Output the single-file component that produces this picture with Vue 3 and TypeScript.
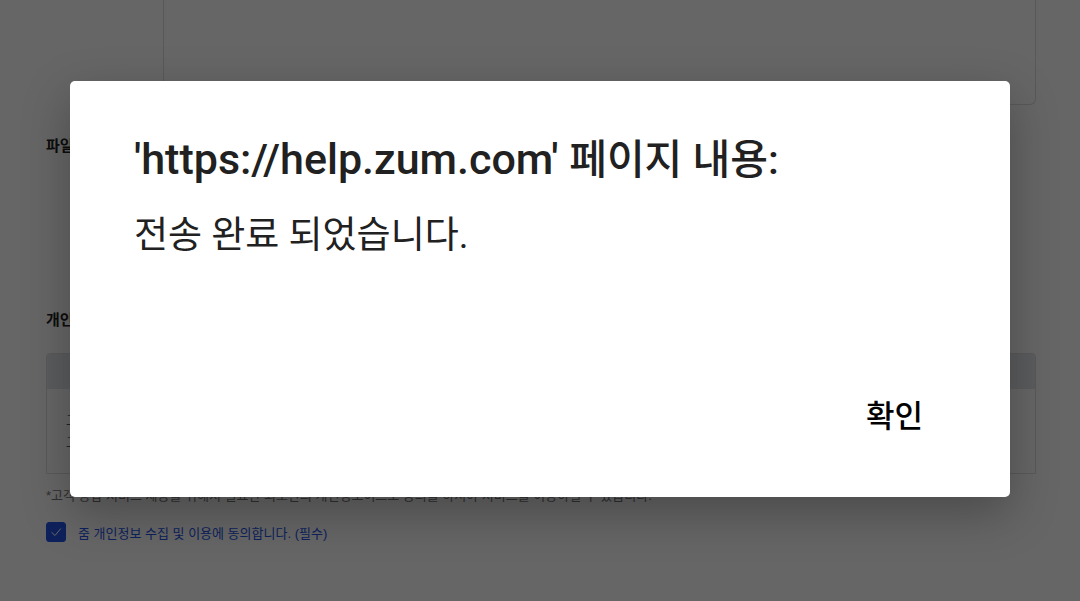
<script setup lang="ts">
import { ref } from 'vue'

const open = ref(true)
const agreed = ref(true)
const message = ref('')
const site = 'https://help.zum.com'
const columns: string[] = ['목적', '항목', '보유 및 이용기간']
</script>

<template>
  <div class="page">
    <form class="form" @submit.prevent>
      <div class="inquiry">
        <textarea v-model="message" class="message" aria-label="문의 내용"></textarea>
      </div>
      <div class="files">
        <span class="label">파일 첨부</span>
      </div>
      <h2 class="label heading">개인정보 수집 및 이용 동의</h2>
      <table class="terms">
        <thead>
          <tr>
            <th v-for="column in columns" :key="column" scope="col">{{ column }}</th>
          </tr>
        </thead>
        <tbody>
          <tr>
            <td>고객 문의 접수<br />고객 문의 회신</td>
            <td>이메일 주소</td>
            <td>3년</td>
          </tr>
        </tbody>
      </table>
      <p class="note">*고객 응답 서비스 제공을 위해서 필요한 최소한의 개인정보이므로 동의를 하셔야 서비스를 이용하실 수 있습니다.</p>
      <label class="agree" for="agree">
        <span class="tick">
          <input id="agree" v-model="agreed" type="checkbox" />
          <svg v-if="agreed" viewBox="0 0 20 20" aria-hidden="true">
            <path d="M5.5 10.2 L9 13.5 L14.8 6.5" />
          </svg>
        </span>
        <span>줌 개인정보 수집 및 이용에 동의합니다. (필수)</span>
      </label>
    </form>

    <div v-if="open" class="overlay">
      <div class="dialog" role="alertdialog" aria-modal="true" aria-labelledby="dialog-title" aria-describedby="dialog-text">
        <h1 id="dialog-title" class="dialog-title"><span class="site">'{{ site }}' </span>페이지 내용:</h1>
        <p id="dialog-text" class="dialog-text">전송 완료 되었습니다.</p>
        <div class="actions">
          <button type="button" class="confirm" @click="open = false">확인</button>
        </div>
      </div>
    </div>
  </div>
</template>

<style>
body {
  background: #fff;
}
</style>

<style scoped>
.page {
  position: relative;
  min-height: 100vh;
  overflow: hidden;
  font-family: "Noto Sans CJK KR", sans-serif;
  color: #222;
}

.page * {
  box-sizing: border-box;
}

.form {
  padding: 0 44px 0 46px;
}

.label {
  margin: 0;
  font-size: 15px;
  line-height: 20px;
  font-weight: 700;
}

.inquiry {
  display: flex;
  height: 105px;
  padding-left: 117px;
}

.message {
  flex: 1;
  min-width: 0;
  padding: 16px;
  border: 1px solid #dedede;
  border-top: 0;
  border-radius: 0 0 6px 6px;
  background: #fff;
  font: inherit;
  resize: none;
}

.files {
  display: flex;
  height: 174px;
  padding-top: 30px;
}

.heading {
  padding-top: 30px;
}

.terms {
  width: 100%;
  margin-top: 24px;
  border: 1px solid #dedede;
  border-radius: 4px 4px 0 0;
  border-spacing: 0;
  table-layout: fixed;
  font-size: 13px;
  line-height: 22px;
  color: #555;
}

.terms th {
  height: 35px;
  padding: 0;
  background: #e2e7ec;
  font-weight: 500;
}

.terms td {
  height: 84px;
  padding: 19px;
  vertical-align: middle;
}

.note {
  margin: 12px 0 0;
  font-family: "Liberation Sans", "Noto Sans CJK KR", sans-serif;
  font-size: 13px;
  line-height: 20px;
  color: #777;
  white-space: nowrap;
}

.agree {
  display: flex;
  align-items: flex-start;
  gap: 12px;
  margin-top: 16px;
  font-family: "Liberation Sans", "Noto Sans CJK KR", sans-serif;
  font-size: 13px;
  line-height: 24px;
  color: #2454e6;
}

.tick {
  display: grid;
  width: 20px;
  height: 20px;
}

.tick input,
.tick svg {
  grid-area: 1 / 1;
  width: 20px;
  height: 20px;
  margin: 0;
}

.tick input {
  appearance: none;
  border: 1px solid #2454e6;
  border-radius: 3px;
}

.tick input:checked {
  background: #2454e6;
}

.tick path {
  fill: none;
  stroke: #fff;
  stroke-width: 1;
}

.overlay {
  position: absolute;
  inset: 0;
  padding: 81px 70px 0;
  background: rgba(0, 0, 0, 0.6);
}

.dialog {
  padding: 51px 64px 48px;
  border-radius: 5px;
  background: #fff;
  box-shadow: 0 16px 48px rgba(0, 0, 0, 0.28);
  font-family: Roboto, "Noto Sans CJK KR", sans-serif;
  color: #212121;
}

.dialog-title {
  margin: 0;
  font-size: 41px;
  line-height: 54px;
  font-weight: 500;
}

.site {
  font-size: 43px;
}

.dialog-text {
  margin: 22px 0 0;
  font-size: 37px;
  line-height: 54px;
}

.actions {
  display: flex;
  justify-content: flex-end;
  margin-top: 122px;
}

.confirm {
  padding: 0 23px;
  border: 0;
  background: transparent;
  color: #000;
  font-family: inherit;
  font-size: 31px;
  line-height: 64px;
  font-weight: 500;
  cursor: pointer;
}
</style>
